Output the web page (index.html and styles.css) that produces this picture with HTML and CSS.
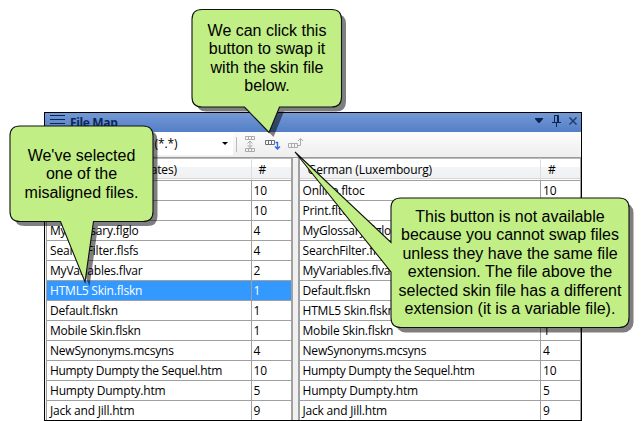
FILE: index.html
```html
<!DOCTYPE html>
<html lang="en">
<head>
<meta charset="utf-8">
<title>File Map</title>
<link rel="stylesheet" href="styles.css">
</head>
<body>
<main class="stage">
  <section class="window">
    <header class="titlebar">
      <svg class="grip" width="16" height="12" viewBox="0 0 16 12"><path d="M1 1.500h15M1 5.500h15M1 9.500h15"/></svg>
      <span class="title">File Map</span>
      <svg class="controls" width="46" height="14" viewBox="0 0 46 14">
        <path class="solid" d="M1 4h8v1l-3.500 4h-1l-3.500-4z"/>
        <path d="M20.500 8V1.500h4V8M23.500 1.500V8M18 8.500h9M22.500 9v4"/>
        <path class="cross" d="M35.500 3.500l7 7M42.500 3.500l-7 7"/>
      </svg>
    </header>
    <div class="toolbar">
      <div class="filter"><span>All Files (*.*)</span><i class="arrow"></i></div>
      <svg class="tools" width="72" height="20" viewBox="0 0 72 20">
        <path class="sep" d="M3.500 3v15"/>
        <g class="off"><path d="M12.500 2.500h9v3h-9zM15.500 2.500v3M18.500 2.500v3M12.500 14.500h9v3h-9zM15.500 14.500v3M18.500 14.500v3M17 7v6.500M14.500 9.500l2.500-2.500 2.500 2.500M14.500 11l2.500 2.500 2.500-2.500"/></g>
        <path class="boxes" d="M32.500 6.500h9v4h-9zM35.500 6.500v4M38.500 6.500v4"/>
        <path class="down" d="M42.500 8.500h2V15M42 12.500l2.500 2.500L47 12.500"/>
        <g class="off"><path d="M55.500 9.500h9v4h-9zM58.500 9.500v4M61.500 9.500v4M65 11.500h2.500V5M65 7l2.500-2.500L70 7"/></g>
      </svg>
    </div>
    <div class="tables">
      <div class="grid left">
        <div class="row head"><span>English (United States)</span><b>#</b></div>
        <div class="row"><span>Online.fltoc</span><b>10</b></div>
        <div class="row"><span>Print.fltoc</span><b>10</b></div>
        <div class="row"><span>MyGlossary.flglo</span><b>4</b></div>
        <div class="row"><span>SearchFilter.flsfs</span><b>4</b></div>
        <div class="row"><span>MyVariables.flvar</span><b>2</b></div>
        <div class="row selected"><span>HTML5 Skin.flskn</span><b>1</b></div>
        <div class="row"><span>Default.flskn</span><b>1</b></div>
        <div class="row"><span>Mobile Skin.flskn</span><b>1</b></div>
        <div class="row"><span>NewSynonyms.mcsyns</span><b>4</b></div>
        <div class="row"><span class="long">Humpty Dumpty the Sequel.htm</span><b>10</b></div>
        <div class="row"><span>Humpty Dumpty.htm</span><b>5</b></div>
        <div class="row"><span>Jack and Jill.htm</span><b>9</b></div>
      </div>
      <div class="grid right">
        <div class="row head"><span>German (Luxembourg)</span><b>#</b></div>
        <div class="row"><span>Online.fltoc</span><b>10</b></div>
        <div class="row"><span>Print.fltoc</span><b>10</b></div>
        <div class="row"><span>MyGlossary.flglo</span><b>4</b></div>
        <div class="row"><span>SearchFilter.flsfs</span><b>4</b></div>
        <div class="row"><span>MyVariables.flvar</span><b>2</b></div>
        <div class="row"><span>Default.flskn</span><b>1</b></div>
        <div class="row"><span>HTML5 Skin.flskn</span><b>1</b></div>
        <div class="row"><span>Mobile Skin.flskn</span><b>1</b></div>
        <div class="row"><span>NewSynonyms.mcsyns</span><b>4</b></div>
        <div class="row"><span class="long">Humpty Dumpty the Sequel.htm</span><b>10</b></div>
        <div class="row"><span>Humpty Dumpty.htm</span><b>5</b></div>
        <div class="row"><span>Jack and Jill.htm</span><b>9</b></div>
      </div>
    </div>
  </section>

  <svg class="bubbles" width="644" height="421" viewBox="0 0 644 421">
    <defs>
      <path id="swap" d="M202 9.500H331.500Q341.500 9.500 341.500 19.500V97Q341.500 107 331.500 107H279.500L269 132.500L244.500 107H202Q192 107 192 97V19.500Q192 9.500 202 9.500Z"/>
      <path id="picked" d="M20 126H143Q153 126 153 136V211.500Q153 221.500 143 221.500H93.500L85 282L60.500 221.500H20Q10 221.500 10 211.500V136Q10 126 20 126Z"/>
    </defs>
    <use class="shade" href="#swap" x="4.500" y="4.500"/>
    <use class="bubble" href="#swap"/>
    <use class="shade" href="#picked" x="4.500" y="4.500"/>
    <use class="bubble" href="#picked"/>
    <rect class="shade" x="395.500" y="202.500" width="238" height="130" rx="10"/>
    <path class="bubble" d="M401 198H619Q629 198 629 208V317.500Q629 327.500 619 327.500H401Q391 327.500 391 317.500V272L295 152L391 242.500V208Q391 198 401 198Z"/>
  </svg>
  <p class="note note-swap">We can click this<br>button to swap it<br>with the skin file<br>below.</p>
  <p class="note note-picked">We've selected<br>one of the<br>misaligned files.</p>
  <p class="note note-blocked">This button is not available<br>because you cannot swap files<br>unless they have the same file<br>extension. The file above the<br>selected skin file has a different<br>extension (it is a variable file).</p>
</main>
</body>
</html>
```
FILE: styles.css
```css
* { box-sizing: border-box; }
body { margin: 0; background: #fff; }
.stage {
  position: relative;
  width: 644px;
  height: 421px;
  padding: 112px 0 0 44px;
  overflow: hidden;
}
.window {
  width: 538px;
  height: 309px;
  border: 1px solid #000;
  background: #f0f0f0;
  font: 12px/19px "Open Sans", "Noto Sans", sans-serif;
  color: #000;
  display: flex;
  flex-direction: column;
  overflow: hidden;
}
.titlebar {
  flex: 0 0 19px;
  display: flex;
  align-items: flex-start;
  padding: 1px 1px 0 4px;
  background: linear-gradient(#7398d5, #547fc7);
}
.grip { fill: none; stroke: #0a2552; }
.title { margin: -1px 0 0 5px; font-weight: 700; color: #0c2859; letter-spacing: -0.35px; }
.controls { margin-left: auto; fill: none; stroke: #0a2552; }
.controls .solid { fill: #0a2552; stroke: none; }
.controls .cross { stroke: #1d3d74; stroke-width: 1.5; }
.toolbar {
  flex: 0 0 26px;
  display: flex;
  align-items: flex-start;
  background: linear-gradient(#fcfcfc, #eee);
  border-bottom: 1px solid #999;
}
.filter {
  width: 188px;
  height: 23px;
  padding: 0 5px 0 66px;
  display: flex;
  align-items: center;
  justify-content: space-between;
  background: #fff;
  letter-spacing: -0.1px;
}
.arrow { border: 3px solid transparent; border-top-color: #000; border-bottom: 0; }
.tools { margin-top: 2px; fill: none; }
.sep { stroke: #bbb; }
.off { stroke: #ababab; }
.boxes { stroke: #6d6d7c; }
.down { stroke: #2b6ce8; stroke-width: 1.4; }
.tables { flex: 1; display: flex; gap: 5px; padding-left: 1px; min-height: 0; }
.grid { border: 1px solid #a0a0a0; border-width: 0 1px; background: #fff; }
.left { width: 247px; border-right-width: 2px; }
.right { width: 284px; border-left-width: 2px; }
.row { display: flex; height: 20px; border-bottom: 1px solid #a0a0a0; white-space: pre; letter-spacing: -0.2px; }
.row span { flex: 1; padding-left: 3px; }
.row b { flex: 0 0 40px; padding-left: 2px; border-left: 1px solid #a0a0a0; font-weight: 400; }
.row .long { letter-spacing: -0.33px; }
.row.head {
  height: 23px;
  line-height: 24px;
  background: linear-gradient(#fff 40%, #f3f4f6 42%, #f0f1f3);
  box-shadow: inset 0 1px #bbb, inset 0 -1px #fff, inset 0 -2px #d5d5d5;
  letter-spacing: -0.12px;
}
.head span { padding-left: 8px; }
.head b { padding-left: 7px; border-color: #ddd; }
.selected { background: #3399ff; color: #fff; }
.bubbles { position: absolute; inset: 0; }
.shade { fill: #000; fill-opacity: 0.5; }
.bubble { fill: #c1ee85; stroke: #111; stroke-width: 1.1; }
.note {
  position: absolute;
  margin: 0;
  font: 16px/18.4px "Liberation Sans", Arial, sans-serif;
  color: #000;
  text-align: center;
  white-space: nowrap;
}
.note-swap { left: 192px; top: 22px; width: 150px; }
.note-picked { left: 10px; top: 147px; width: 143px; }
.note-blocked { left: 391px; top: 208px; width: 238px; }
```
